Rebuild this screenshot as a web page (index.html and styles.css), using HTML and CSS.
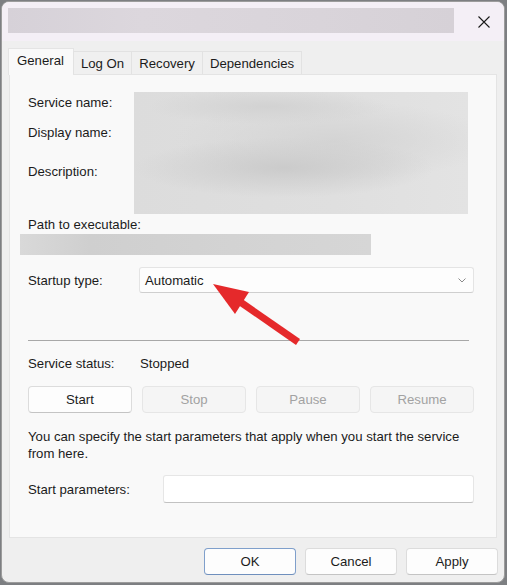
FILE: index.html
```html
<!DOCTYPE html>
<html lang="en">
<head>
  <meta charset="UTF-8">
  <title>Service Properties</title>
  <link rel="stylesheet" href="styles.css">
</head>
<body>
  <div class="window">
    <div class="titlebar">
      <div class="title-blur"></div>
      <button class="btn-close">
        <svg width="12" height="12" viewBox="0 0 12 12"><path d="M0.5 0.5L11.5 11.5M11.5 0.5L0.5 11.5" stroke="#1a1a1a" stroke-width="1.1" fill="none"/></svg>
      </button>
    </div>

    <div class="dialog">
      <div class="tabs">
        <div class="tab tab-active">General</div>
        <div class="tab">Log On</div>
        <div class="tab">Recovery</div>
        <div class="tab">Dependencies</div>
      </div>

      <div class="panel">
        <div class="info">
          <div class="info-labels">
            <div class="lbl-service">Service name:</div>
            <div class="lbl-display">Display name:</div>
            <div class="lbl-desc">Description:</div>
          </div>
          <div class="info-blur"></div>
        </div>
        <div class="path-label">Path to executable:</div>
        <div class="path-blur"></div>

        <div class="row row-startup">
          <span class="label">Startup type:</span>
          <div class="select">
            <span>Automatic</span>
            <svg width="8" height="5" viewBox="0 0 8 5"><path d="M0.5 0.5L4 4L7.5 0.5" stroke="#8a8a8a" stroke-width="1" fill="none"/></svg>
          </div>
        </div>

        <div class="sep"></div>

        <div class="row row-status">
          <span class="label">Service status:</span>
          <span>Stopped</span>
        </div>

        <div class="svc-buttons">
          <button class="btn">Start</button>
          <button class="btn" disabled>Stop</button>
          <button class="btn" disabled>Pause</button>
          <button class="btn" disabled>Resume</button>
        </div>

        <p class="hint">You can specify the start parameters that apply when you start the service from here.</p>

        <div class="row row-params">
          <span class="label">Start parameters:</span>
          <div class="input"></div>
        </div>
      </div>

      <div class="footer">
        <button class="btn btn-footer btn-default">OK</button>
        <button class="btn btn-footer">Cancel</button>
        <button class="btn btn-footer">Apply</button>
      </div>
    </div>
  </div>

  <!-- annotation arrow -->
  <svg class="annot-arrow" width="507" height="585" viewBox="0 0 507 585">
    <line x1="298" y1="342" x2="236" y2="299" stroke="#e5292b" stroke-width="7"/>
    <polygon points="213,284 249,292 235,314" fill="#e5292b"/>
  </svg>
</body>
</html>
```

FILE: styles.css
```css
body {
  margin: 0;
  background: #7d7f82;
  font-family: "Liberation Sans", Arial, sans-serif;
  font-size: 13.2px;
  color: #1b1b1b;
  position: relative;
  width: 507px;
  height: 585px;
  overflow: hidden;
}

.window {
  margin: 1px 0 0 1px;
  width: 504px;
  height: 582px;
  box-sizing: border-box;
  border: 1px solid #9c9c9c;
  border-radius: 8px;
  background: #efefef;
  overflow: hidden;
  display: flex;
  flex-direction: column;
}

/* title bar */
.titlebar {
  height: 39px;
  background: #f4eff6;
  display: flex;
  align-items: flex-start;
  padding: 6px 0 0 6px;
  box-sizing: border-box;
}
.title-blur {
  width: 446px;
  height: 25px;
  background: linear-gradient(to right, #d6d1d8, #dcd7dd 30%, #d9d4da 70%, #d6d1d7);
}
.btn-close {
  margin-left: auto;
  width: 40px;
  height: 25px;
  border: none;
  background: none;
  padding: 0;
  display: flex;
  align-items: center;
  justify-content: center;
  margin-top: 1px;
}

/* dialog body */
.dialog {
  flex: 1;
  padding: 8px 7px 0 7px;
  display: flex;
  flex-direction: column;
}

.tabs {
  display: flex;
  align-items: flex-end;
  height: 25px;
  position: relative;
  z-index: 1;
  margin-left: -1px;
}
.tab {
  height: 23px;
  line-height: 23px;
  padding: 0 7px;
  box-sizing: border-box;
  border: 1px solid #e2e2e2;
  border-bottom: none;
  background: #f0f0f0;
  margin-left: -1px;
}
.tab-active {
  height: 27px;
  line-height: 24px;
  margin-left: 0;
  margin-bottom: -1px;
  padding: 0 9px 0 8px;
  background: #f9f9f9;
  border-color: #e4e4e4;
}

.panel {
  height: 464px;
  box-sizing: border-box;
  border: 1px solid #e4e4e4;
  background: #f9f9f9;
  padding: 17px 22px 0 18px;
}

.info {
  display: flex;
}
.info-labels {
  width: 106px;
  padding-top: 3px;
  line-height: 16px;
}
.lbl-display {
  margin-top: 14px;
}
.lbl-desc {
  margin-top: 23px;
}
.info-blur {
  width: 334px;
  height: 122px;
  background:
    radial-gradient(ellipse 120px 18px at 40% 12%, #d2d2d2, transparent),
    radial-gradient(ellipse 150px 30px at 45% 62%, #cbcbcb, transparent),
    radial-gradient(ellipse 160px 40px at 60% 40%, #d4d4d4, transparent),
    linear-gradient(to right, #dcdcdc, #dfdfdf 60%, #e3e3e3);
}

.path-label {
  margin-top: 3px;
  line-height: 16px;
}
.path-blur {
  margin: 1px 0 0 -8px;
  width: 351px;
  height: 21px;
  background: linear-gradient(to right, #d9d9d9, #cfcfcf 20%, #d3d3d3 60%, #d6d6d6);
}

.row {
  display: flex;
  align-items: center;
}
.row-startup {
  margin-top: 12px;
}
.row-startup .label {
  width: 111px;
}
.select {
  flex: 1;
  height: 26px;
  box-sizing: border-box;
  background: #fdfdfd;
  border: 1px solid #e4e4e4;
  border-bottom-color: #cfcfcf;
  border-radius: 3px;
  display: flex;
  align-items: center;
  justify-content: space-between;
  padding: 0 7px 0 5px;
}

.sep {
  margin: 47px 5px 0 0;
  height: 1px;
  background: #a8a8a8;
}

.row-status {
  margin-top: 15px;
  line-height: 16px;
}
.row-status .label {
  width: 112px;
}

.svc-buttons {
  margin-top: 14px;
  display: grid;
  grid-template-columns: repeat(4, 1fr);
  gap: 10px;
}

.btn {
  height: 27px;
  box-sizing: border-box;
  background: #fdfdfd;
  border: 1px solid #dcdcdc;
  border-bottom-color: #c4c4c4;
  border-radius: 4px;
  font-family: inherit;
  font-size: 13.2px;
  color: #1b1b1b;
  padding: 0;
}
.btn:disabled {
  background: #f5f5f5;
  border-color: #e6e6e6;
  color: #a2a2a2;
}

.hint {
  margin: 15px 0 0 0;
  line-height: 17px;
}

.row-params {
  margin-top: 13px;
}
.row-params .label {
  width: 135px;
}
.input {
  flex: 1;
  height: 28px;
  box-sizing: border-box;
  background: #fff;
  border: 1px solid #e6e6e6;
  border-bottom-color: #c2c2c2;
  border-radius: 3px;
}

/* footer buttons */
.footer {
  display: flex;
  justify-content: flex-end;
  gap: 9px;
  padding-top: 10px;
  margin-right: -1px;
}
.btn-footer {
  width: 92px;
}
.btn-default {
  border-color: #7f9fcb;
  border-bottom-color: #6f8fbd;
}

.annot-arrow {
  position: absolute;
  left: 0;
  top: 0;
  pointer-events: none;
}
```
